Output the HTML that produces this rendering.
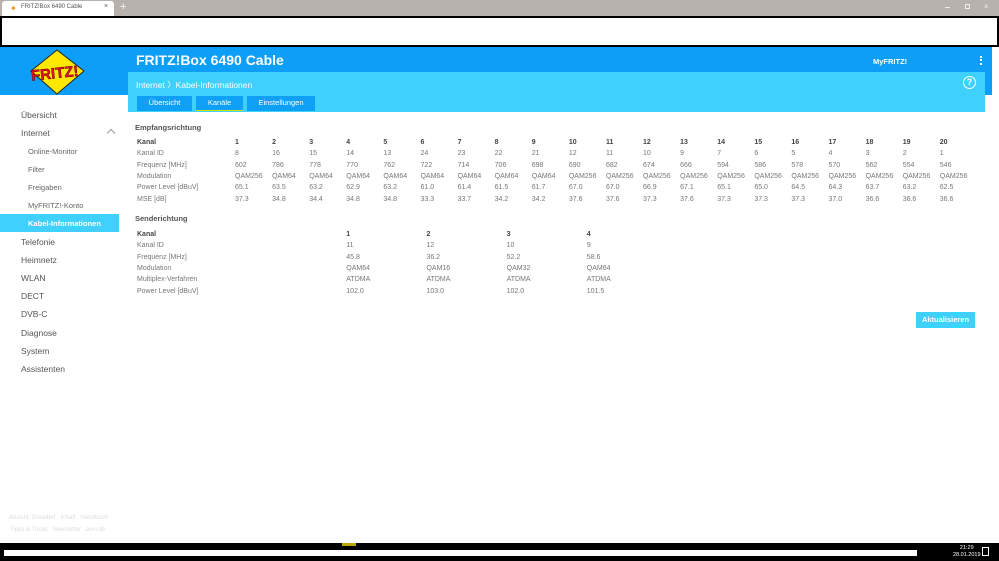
<!DOCTYPE html>
<html><head><meta charset="utf-8"><style>
*{margin:0;padding:0;box-sizing:border-box}
body{width:999px;height:561px;overflow:hidden;background:#fff;font-family:"Liberation Sans",sans-serif;position:relative;color:#666}
.a{position:absolute}
table{border-collapse:collapse;table-layout:fixed;position:absolute;font-size:7px;color:#777}
td{height:11.3px;padding:0;white-space:nowrap;vertical-align:middle}
tr.h td{color:#444;font-weight:bold}
.nav{position:absolute;left:21px;font-size:8.5px;color:#555}
.sub{position:absolute;left:28px;font-size:7.5px;color:#666}
.tab{position:absolute;top:96px;height:15px;background:#0ea0f4;color:#fff;font-size:7.5px;text-align:center;line-height:14px}
</style></head><body>
<div class="a" style="left:0;top:0;width:999px;height:16px;background:#b8b2ae"></div>
<div class="a" style="left:2px;top:1px;width:112px;height:15px;background:#fff;border-radius:3px 3px 0 0"></div>
<div class="a" style="left:10px;top:4px;color:#e68a00;font-size:8px">✦</div>
<div class="a" style="left:21px;top:4px;font-size:6px;color:#555">FRITZ!Box 6490 Cable</div>
<div class="a" style="left:104px;top:3px;font-size:7px;color:#555">×</div>
<div class="a" style="left:120px;top:1px;font-size:11px;color:#fff">+</div>
<div class="a" style="left:945px;top:7px;width:5px;height:1px;background:#eee"></div>
<div class="a" style="left:965px;top:4px;width:5px;height:5px;border:1px solid #eee"></div>
<div class="a" style="left:984px;top:2px;font-size:8px;color:#eee">×</div>
<div class="a" style="left:0;top:16px;width:999px;height:31px;background:#fff;border:2px solid #000"></div>
<div class="a" style="left:0;top:47px;width:992px;height:48px;background:#0d9ef7"></div>
<div class="a" style="left:128px;top:72px;width:857px;height:40px;background:#3fd0fb"></div>
<svg class="a" style="left:28px;top:48px" width="62" height="48"><polygon points="29,2 56,23 29,46 3,23" fill="#ffe800" stroke="#222" stroke-width="1"/><text x="3" y="30" font-family="Liberation Sans" font-weight="bold" font-size="15" fill="#e8112d" stroke="#600" stroke-width=".5" transform="rotate(-6 30 25)">FRITZ!</text></svg>
<div class="a" style="left:136px;top:52px;font-size:14px;font-weight:bold;color:#fff">FRITZ!Box 6490 Cable</div>
<div class="a" style="left:873px;top:57px;font-size:7.5px;font-weight:bold;color:#fff">MyFRITZ!</div>
<div class="a" style="left:980px;top:56px;width:2px;height:9px;border-left:2px dotted #fff"></div>
<div class="a" style="left:136px;top:79px;font-size:8.5px;color:#fff">Internet 〉Kabel-Informationen</div>
<div class="a" style="left:963px;top:76px;width:13px;height:13px;border:1.5px solid #fff;border-radius:50%;color:#fff;font-size:9px;font-weight:bold;text-align:center;line-height:10px">?</div>
<div class="tab" style="left:137px;width:55px">Übersicht</div>
<div class="tab" style="left:196px;width:47px;border-bottom:1.5px solid #d6e600">Kanäle</div>
<div class="tab" style="left:247px;width:68px">Einstellungen</div>

<div class="nav" style="top:110px">Übersicht</div>
<div class="nav" style="top:128px">Internet</div>
<div class="a" style="left:108px;top:130px;width:6px;height:6px;border-left:1px solid #999;border-top:1px solid #999;transform:rotate(45deg)"></div>
<div class="sub" style="top:147px">Online-Monitor</div>
<div class="sub" style="top:165px">Filter</div>
<div class="sub" style="top:183px">Freigaben</div>
<div class="sub" style="top:201px">MyFRITZ!-Konto</div>
<div class="a" style="left:0;top:214px;width:119px;height:18px;background:#3fd0fb"></div>
<div class="sub" style="top:219px;color:#fff;font-weight:bold">Kabel-Informationen</div>
<div class="nav" style="top:237px">Telefonie</div>
<div class="nav" style="top:255px">Heimnetz</div>
<div class="nav" style="top:273px">WLAN</div>
<div class="nav" style="top:291px">DECT</div>
<div class="nav" style="top:309px">DVB-C</div>
<div class="nav" style="top:328px">Diagnose</div>
<div class="nav" style="top:346px">System</div>
<div class="nav" style="top:364px">Assistenten</div>
<div class="a" style="left:9px;top:515px;font-size:6px;color:#ddd">Ansicht: Erweitert &nbsp; Inhalt &nbsp; Handbuch</div>
<div class="a" style="left:10px;top:527px;font-size:6px;color:#ddd">Tipps &amp; Tricks &nbsp; Newsletter &nbsp; avm.de</div>

<div class="a" style="left:135px;top:123px;font-size:7.5px;font-weight:bold;color:#555">Empfangsrichtung</div>
<table style="left:137px;top:137px;width:840px">
<colgroup><col style="width:98px"><col span="20" style="width:37.1px"></colgroup>
<tr class="h"><td>Kanal</td><td>1</td><td>2</td><td>3</td><td>4</td><td>5</td><td>6</td><td>7</td><td>8</td><td>9</td><td>10</td><td>11</td><td>12</td><td>13</td><td>14</td><td>15</td><td>16</td><td>17</td><td>18</td><td>19</td><td>20</td></tr>
<tr><td>Kanal ID</td><td>8</td><td>16</td><td>15</td><td>14</td><td>13</td><td>24</td><td>23</td><td>22</td><td>21</td><td>12</td><td>11</td><td>10</td><td>9</td><td>7</td><td>6</td><td>5</td><td>4</td><td>3</td><td>2</td><td>1</td></tr>
<tr><td>Frequenz [MHz]</td><td>602</td><td>786</td><td>778</td><td>770</td><td>762</td><td>722</td><td>714</td><td>706</td><td>698</td><td>690</td><td>682</td><td>674</td><td>666</td><td>594</td><td>586</td><td>578</td><td>570</td><td>562</td><td>554</td><td>546</td></tr>
<tr><td>Modulation</td><td>QAM256</td><td>QAM64</td><td>QAM64</td><td>QAM64</td><td>QAM64</td><td>QAM64</td><td>QAM64</td><td>QAM64</td><td>QAM64</td><td>QAM256</td><td>QAM256</td><td>QAM256</td><td>QAM256</td><td>QAM256</td><td>QAM256</td><td>QAM256</td><td>QAM256</td><td>QAM256</td><td>QAM256</td><td>QAM256</td></tr>
<tr><td>Power Level [dBuV]</td><td>65.1</td><td>63.5</td><td>63.2</td><td>62.9</td><td>63.2</td><td>61.0</td><td>61.4</td><td>61.5</td><td>61.7</td><td>67.0</td><td>67.0</td><td>66.9</td><td>67.1</td><td>65.1</td><td>65.0</td><td>64.5</td><td>64.3</td><td>63.7</td><td>63.2</td><td>62.5</td></tr>
<tr><td>MSE [dB]</td><td>37.3</td><td>34.8</td><td>34.4</td><td>34.8</td><td>34.8</td><td>33.3</td><td>33.7</td><td>34.2</td><td>34.2</td><td>37.6</td><td>37.6</td><td>37.3</td><td>37.6</td><td>37.3</td><td>37.3</td><td>37.3</td><td>37.0</td><td>36.6</td><td>36.6</td><td>36.6</td></tr>
</table>

<div class="a" style="left:135px;top:214px;font-size:7.5px;font-weight:bold;color:#555">Senderichtung</div>
<table style="left:137px;top:229px;width:530px">
<colgroup><col style="width:207px"><col span="4" style="width:79.3px"></colgroup>
<tr class="h"><td>Kanal</td><td>1</td><td>2</td><td>3</td><td>4</td></tr>
<tr><td>Kanal ID</td><td>11</td><td>12</td><td>10</td><td>9</td></tr>
<tr><td>Frequenz [MHz]</td><td>45.8</td><td>36.2</td><td>52.2</td><td>58.6</td></tr>
<tr><td>Modulation</td><td>QAM64</td><td>QAM16</td><td>QAM32</td><td>QAM64</td></tr>
<tr><td>Multiplex-Verfahren</td><td>ATDMA</td><td>ATDMA</td><td>ATDMA</td><td>ATDMA</td></tr>
<tr><td>Power Level [dBuV]</td><td>102.0</td><td>103.0</td><td>102.0</td><td>101.5</td></tr>
</table>

<div class="a" style="left:916px;top:312px;width:59px;height:16px;background:#3fd0fb;color:#fff;font-size:7.5px;font-weight:bold;text-align:center;line-height:16px">Aktualisieren</div>

<div class="a" style="left:0;top:543px;width:999px;height:18px;background:#000"></div>
<div class="a" style="left:4px;top:550px;width:913px;height:6px;background:#fff"></div>
<div class="a" style="left:342px;top:543px;width:14px;height:3px;background:#b8a800"></div>
<div class="a" style="left:953px;top:545px;font-size:5.5px;color:#fff;text-align:center;line-height:7px">21:29<br>28.01.2019</div>
<div class="a" style="left:982px;top:547px;width:7px;height:9px;border:1px solid #fff"></div>
</body></html>
